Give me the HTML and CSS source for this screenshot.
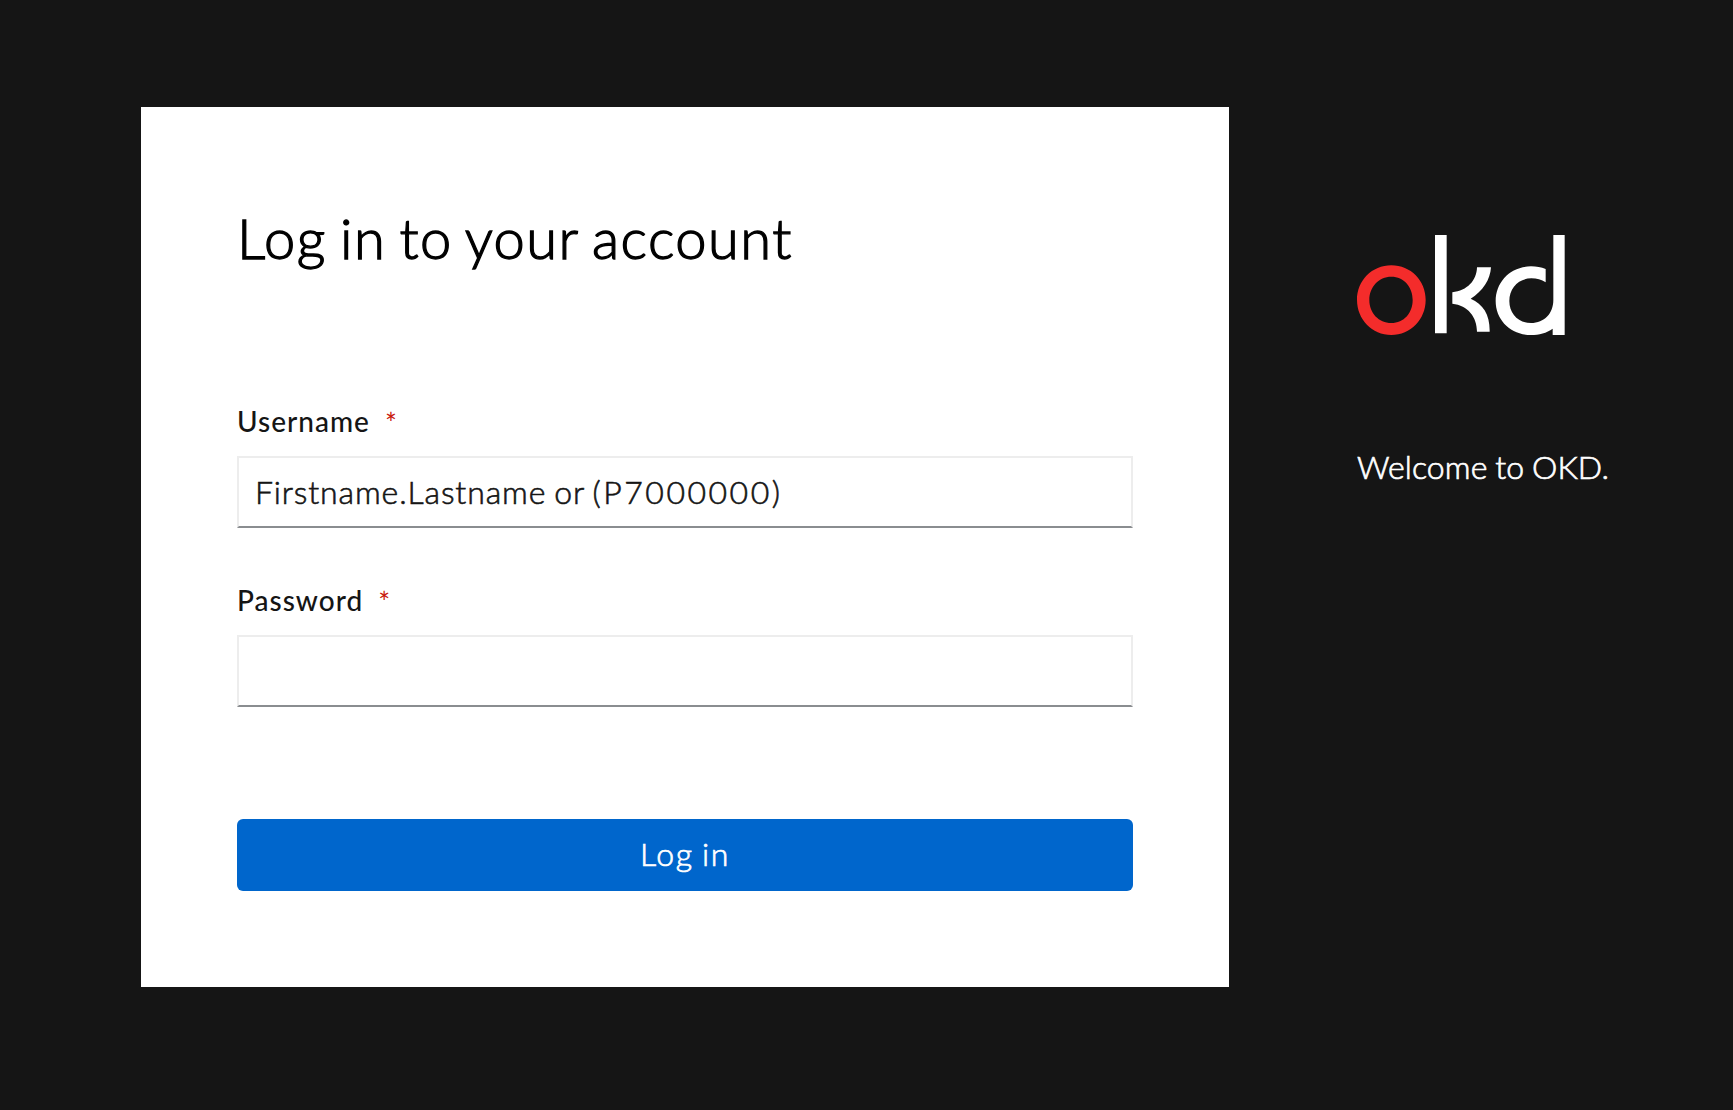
FILE: index.html
```html
<!DOCTYPE html>
<html lang="en">
<head>
<meta charset="utf-8">
<title>Login - OKD</title>
<link rel="stylesheet" href="styles.css">
</head>
<body>
<div class="login">
  <main class="card">
    <h1 class="title">Log in to your account</h1>
    <form class="form">
      <div class="field">
        <label class="label" for="username"><span class="label-text">Username</span><span class="required">*</span></label>
        <div class="input" id="username">Firstname.Lastname or <span class="code">(P7000000)</span></div>
      </div>
      <div class="field">
        <label class="label" for="password"><span class="label-text">Password</span><span class="required">*</span></label>
        <div class="input" id="password"></div>
      </div>
      <button class="submit" type="button">Log in</button>
    </form>
  </main>
  <aside class="brand">
    <svg class="logo" viewBox="51 45 624 300" role="img" aria-label="okd">
      <path fill="#f42c2b" fill-rule="evenodd" d="M154 136C212 136 257 182 257 240S212 345 154 345S51 298 51 240S96 136 154 136ZM154 170C116 170 88 201 88 240S116 309 154 309S218 279 218 240S192 170 154 170Z"/>
      <path fill="#fff" d="M285 45H320V340H285ZM411 142H453C451 179 428 214 392 236C430 252 450 285 449 335H411C411 291 384 256 337 251V217C382 212 410 182 411 142Z"/>
      <path fill="#fff" d="M640 45H674V345H638V326C620 339 597 345 573 345C513 345 467 301 467 243C467 184 513 139 573 139C589 139 604 142 617 147V187C604 179 591 175 574 175C536 175 508 204 508 243C508 281 535 309 573 309C613 309 640 280 640 240Z"/>
    </svg>
    <p class="welcome">Welcome to OKD.</p>
  </aside>
</div>
</body>
</html>
```
FILE: styles.css
```css
* { box-sizing: border-box; }
body {
  margin: 0;
  background: #151515;
  color: #151515;
  font-family: Lato, "Open Sans", sans-serif;
  font-size: 32px;
  font-weight: 300;
}
.login {
  display: flex;
  gap: 128px;
  height: 1110px;
  padding: 107px 0 0 141px;
  overflow: hidden;
}
.card {
  width: 1088px;
  height: 880px;
  padding: 94px 96px 96px;
  background: #fff;
}
.title {
  margin: 0 0 126px;
  color: #000;
  font-size: 56px;
  font-weight: 300;
  line-height: 73px;
  letter-spacing: 1.5px;
  word-spacing: -3.5px;
  white-space: nowrap;
  -webkit-text-stroke: 1.3px #000;
}
.form { display: flex; flex-direction: column; }
.field { margin-bottom: 51px; }
.label {
  display: flex;
  gap: 15px;
  height: 56px;
  font-size: 28px;
  line-height: 42px;
}
.label-text { font-weight: 500; letter-spacing: 1px; }
.required { color: #c9190b; font-weight: 400; line-height: 46px; }
.input {
  height: 72px;
  padding: 0 16px;
  border: 2px solid #ededed;
  border-bottom-color: #8a8d90;
  line-height: 67px;
  letter-spacing: 0.87px;
  word-spacing: -1.5px;
  white-space: nowrap;
  -webkit-text-stroke: 0.6px #151515;
}
.code { letter-spacing: 2.5px; }
.submit {
  height: 72px;
  margin-top: 61px;
  padding: 0 0 4px;
  border: 0;
  border-radius: 6px;
  background: #06c;
  color: #fff;
  font: inherit;
  letter-spacing: 1.6px;
  word-spacing: -2px;
  -webkit-text-stroke: 0.7px #fff;
}
.brand { padding-top: 128px; color: #fff; }
.logo { display: block; width: 208px; height: 100px; }
.welcome {
  margin: 108px 0 0;
  line-height: 47px;
  letter-spacing: 0.1px;
  word-spacing: -1px;
  white-space: nowrap;
  -webkit-text-stroke: 0.7px #fff;
}
```
